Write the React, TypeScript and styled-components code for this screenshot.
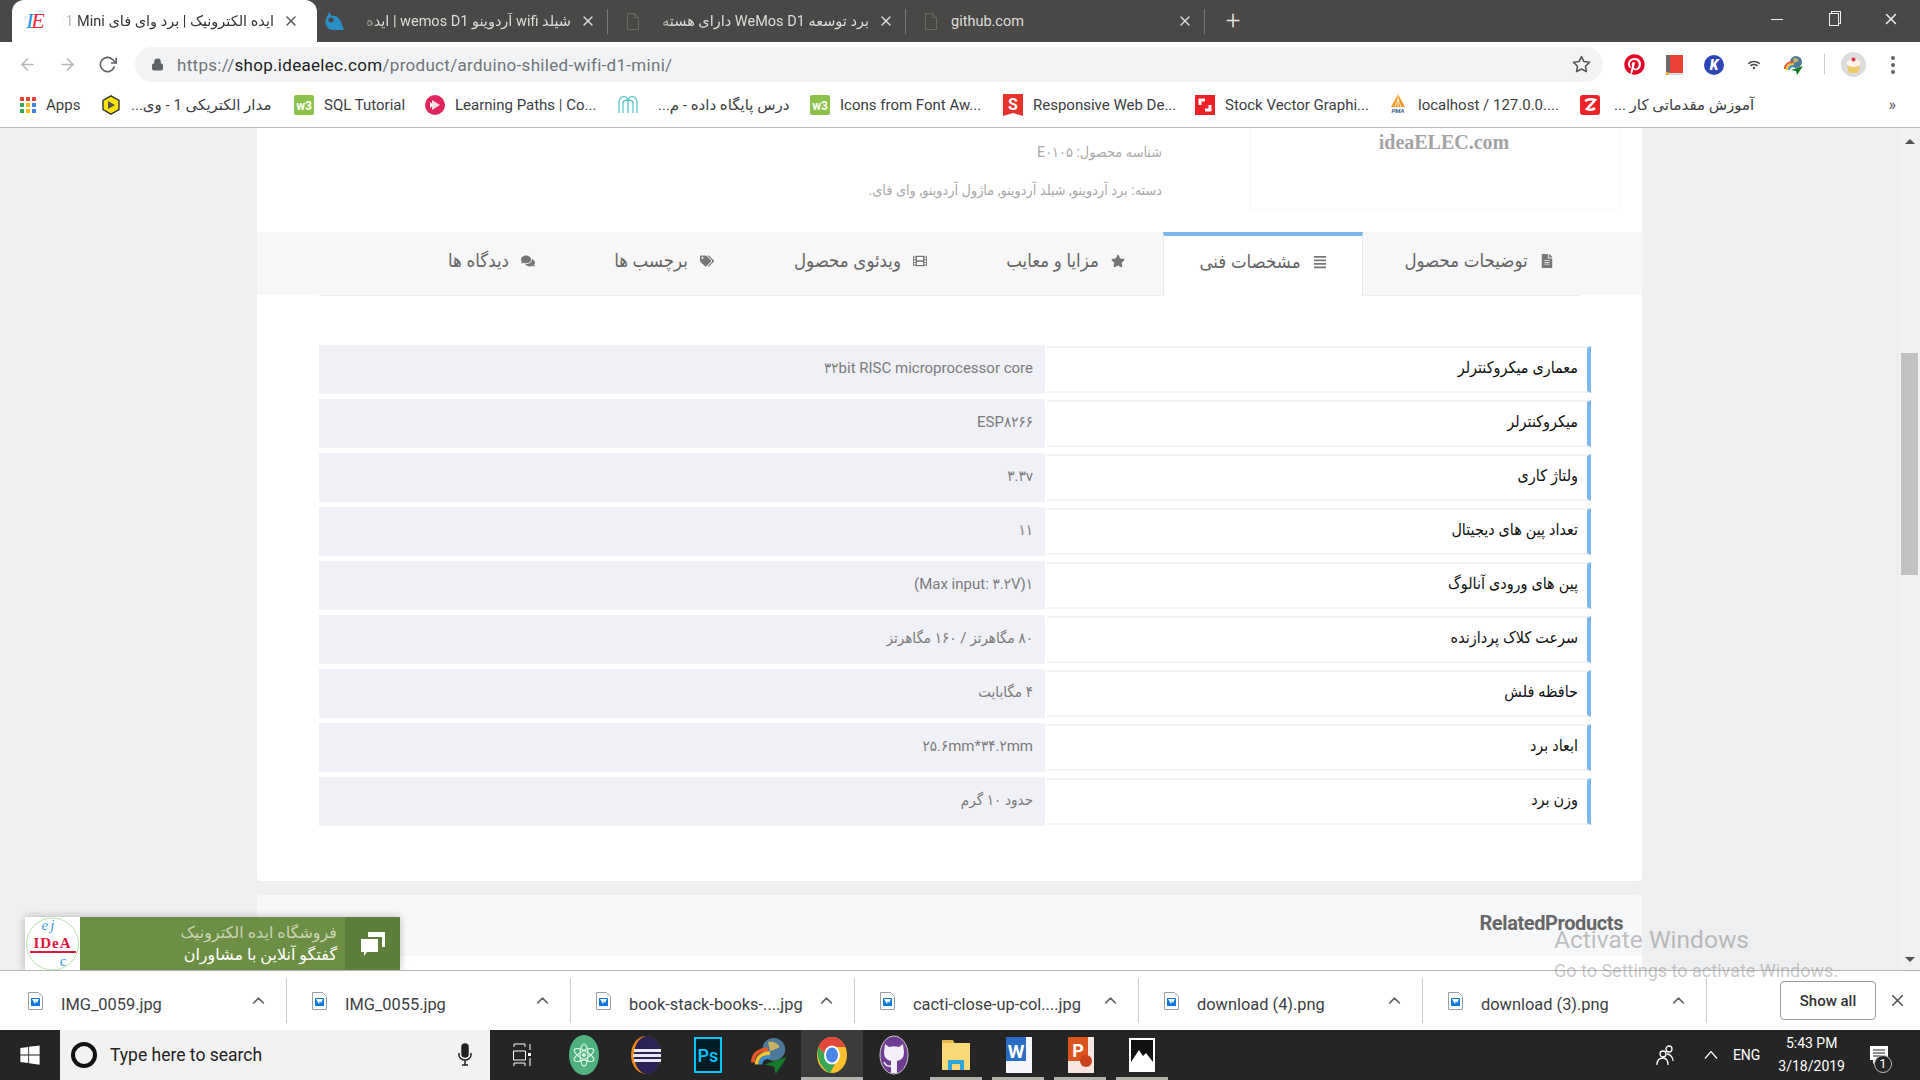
import React from 'react'
import styled, { createGlobalStyle } from 'styled-components'
import {
  FaAlignJustify,
  FaComments,
  FaFileAlt,
  FaFilm,
  FaPinterest,
  FaStar,
  FaTags,
  FaWifi,
  FaWindows,
} from 'react-icons/fa'
import { FiArrowLeft, FiArrowRight, FiChevronUp, FiLock, FiRotateCw, FiStar, FiX } from 'react-icons/fi'

const ui = `Roboto, "DejaVu Sans", sans-serif`
const page = `Roboto, "DejaVu Sans Condensed", "DejaVu Sans", sans-serif`

const GlobalStyle = createGlobalStyle`
  html, body { margin: 0; padding: 0; background: #fff; }
  * { box-sizing: border-box; }
`

const specs = [
  ['معماری میکروکنترلر', '۳۲bit RISC microprocessor core'],
  ['میکروکنترلر', 'ESP۸۲۶۶'],
  ['ولتاژ کاری', '۳.۳v'],
  ['تعداد پین های دیجیتال', '۱۱'],
  ['پین های ورودی آنالوگ', '۱(Max input: ۳.۲V)'],
  ['سرعت کلاک پردازنده', '۸۰ مگاهرتز / ۱۶۰ مگاهرتز'],
  ['حافظه فلش', '۴ مگابایت'],
  ['ابعاد برد', '۲۵.۶mm*۳۴.۲mm'],
  ['وزن برد', 'حدود ۱۰ گرم'],
]

const DocIcon = () => (
  <svg width="14" height="17" viewBox="0 0 14 17">
    <path d="M1.5 .5h7l4 4v12h-11z" fill="none" stroke="#6b6966" />
    <path d="M8.5 .5v4h4" fill="none" stroke="#6b6966" />
  </svg>
)

const HandIcon = () => (
  <svg width="22" height="22" viewBox="0 0 22 22">
    <path d="M6 2l3 4c4-1 7 2 9 6l3 8H10C4 20 1 14 3 9z" fill="#2a8fc7" />
    <circle cx="8" cy="10" r="2.6" fill="#4a4846" />
  </svg>
)

const AppsIcon = () => (
  <svg width="16" height="16" viewBox="0 0 16 16">
    {['#ea4335', '#ea4335', '#ea4335', '#34a853', '#fbbc05', '#4285f4', '#34a853', '#fbbc05', '#4285f4'].map((c, i) => (
      <rect key={i} x={(i % 3) * 6} y={Math.floor(i / 3) * 6} width="4" height="4" fill={c} />
    ))}
  </svg>
)

const HexIcon = () => (
  <svg width="20" height="20" viewBox="0 0 20 20">
    <path d="M10 .8l8 4.6v9.2l-8 4.6-8-4.6V5.400z" fill="#ffe600" stroke="#333" strokeWidth="1.400" />
    <path d="M7 6l7 4-7 4z" fill="#555" />
  </svg>
)

const W3Icon = () => (
  <svg width="20" height="20" viewBox="0 0 20 20">
    <rect width="20" height="20" rx="2" fill="#8bc34a" />
    <text x="10" y="15" textAnchor="middle" fontSize="12" fontWeight="700" fontFamily="Roboto, sans-serif" fill="#fff">w3</text>
  </svg>
)

const RedPlayIcon = () => (
  <svg width="20" height="20" viewBox="0 0 20 20">
    <circle cx="10" cy="10" r="10" fill="#e0245e" />
    <path d="M7 5l8 5-8 5z" fill="#fff" opacity=".85" />
    <path d="M5 7l4 3-4 3z" fill="#fff" />
  </svg>
)

const ArchIcon = () => (
  <svg width="20" height="20" viewBox="0 0 20 20" fill="none" stroke="#59c3c9" strokeWidth="1.300">
    <path d="M1 18V8c0-8 8-8 9-3 1-5 9-5 9 3v10" />
    <path d="M5 18V8c0-3 3-3 5-3s5 0 5 3v10M10 5v13" />
  </svg>
)

const SIcon = () => (
  <svg width="20" height="22" viewBox="0 0 20 22">
    <path d="M0 0h20v22l-10-3-10 3z" fill="#e8332a" />
    <text x="10" y="16" textAnchor="middle" fontSize="16" fontWeight="700" fontFamily="Roboto, sans-serif" fill="#fff">S</text>
  </svg>
)

const StockIcon = () => (
  <svg width="20" height="20" viewBox="0 0 20 20">
    <rect width="20" height="20" fill="#ec2227" />
    <path d="M5 10V5h5M15 10v5h-5" fill="none" stroke="#fff" strokeWidth="3" />
  </svg>
)

const PmaIcon = () => (
  <svg width="20" height="22" viewBox="0 0 20 22">
    <path d="M10 0l7 13H3z" fill="#f29b24" />
    <path d="M10 0v13M7 13l3-8 3 8" stroke="#fff" strokeWidth=".7" fill="none" />
    <text x="10" y="19" textAnchor="middle" fontSize="6" fontStyle="italic" fontWeight="700" fontFamily="Roboto, sans-serif" fill="#3b5a8a">PMA</text>
  </svg>
)

const ZIcon = () => (
  <svg width="20" height="20" viewBox="0 0 20 20">
    <rect width="20" height="20" rx="3" fill="#ec2227" />
    <path d="M5 6c3-2 7-2 10-1l-8 9c3 1 6 1 8-1" fill="none" stroke="#fff" strokeWidth="2.600" />
  </svg>
)

const RedBookIcon = () => (
  <svg width="17" height="20" viewBox="0 0 17 20">
    <rect width="4" height="18" fill="#6b6b6b" />
    <rect x="4" width="13" height="18" fill="#e94335" />
    <rect y="18" width="17" height="2" fill="#ddd" />
    <rect y="17" width="3" height="3" fill="#e8a33d" />
  </svg>
)

const KIcon = () => (
  <svg width="20" height="20" viewBox="0 0 20 20">
    <circle cx="10" cy="10" r="10" fill="#2c46b5" />
    <text x="10" y="15" textAnchor="middle" fontSize="14" fontWeight="900" fontStyle="italic" fontFamily="Roboto, sans-serif" fill="#fff">K</text>
  </svg>
)

const IdmIcon = ({ size = 20 }: { size?: number }) => (
  <svg width={size} height={size} viewBox="0 0 20 20">
    <circle cx="12" cy="7" r="6" fill="#4d7a9a" />
    <path d="M9 3c2 0 5 0 6 3l-5 2z" fill="#c9b260" />
    <path d="M1 14c0-5 4-7 8-7" fill="none" stroke="#e8572a" strokeWidth="2" />
    <path d="M3 15c0-4 3-6 7-6" fill="none" stroke="#f2c230" strokeWidth="2" />
    <path d="M5 15c0-3 2-4 5-4" fill="none" stroke="#3a8fd0" strokeWidth="2" />
    <path d="M7 15l12-4-6 9-1-4z" fill="#127a26" />
  </svg>
)

const CupcakeIcon = () => (
  <svg width="25" height="25" viewBox="0 0 25 25">
    <circle cx="12.500" cy="12.500" r="12.500" fill="#dcdcdc" />
    <path d="M6 14h13l-2 7H8z" fill="#f0c96a" />
    <ellipse cx="12.500" cy="11" rx="7" ry="4" fill="#fff3ea" />
    <circle cx="12.500" cy="7.500" r="2" fill="#d8324a" />
  </svg>
)

const AtomIcon = () => (
  <svg width="30" height="40" viewBox="0 0 30 40">
    <ellipse cx="15" cy="20" rx="15" ry="20" fill="#4fb27e" />
    <g fill="none" stroke="#d9f2e4" strokeWidth="1.200">
      <ellipse cx="15" cy="20" rx="4" ry="11" />
      <ellipse cx="15" cy="20" rx="4" ry="11" transform="rotate(60 15 20)" />
      <ellipse cx="15" cy="20" rx="4" ry="11" transform="rotate(-60 15 20)" />
    </g>
    <circle cx="15" cy="20" r="2" fill="#d9f2e4" />
  </svg>
)

const EclipseIcon = () => (
  <svg width="30" height="40" viewBox="0 0 30 40">
    <ellipse cx="15" cy="20" rx="15" ry="19" fill="#f08a12" />
    <ellipse cx="16.500" cy="20" rx="13.500" ry="19" fill="#2c2255" />
    <rect x="3" y="14" width="27" height="3" fill="#e8e8f2" />
    <rect x="2" y="19" width="28" height="3" fill="#e8e8f2" />
    <rect x="3" y="24" width="27" height="3" fill="#e8e8f2" />
  </svg>
)

const PsIcon = () => (
  <svg width="28" height="36" viewBox="0 0 28 36">
    <rect x="1" y="1" width="26" height="34" fill="#001d26" stroke="#00c8ff" strokeWidth="2" />
    <text x="14" y="25" textAnchor="middle" fontSize="18" fontWeight="500" fontFamily="Roboto, sans-serif" fill="#00c8ff">Ps</text>
  </svg>
)

const ChromeIcon = () => (
  <svg width="30" height="38" viewBox="0 0 30 38">
    <ellipse cx="15" cy="19" rx="15" ry="18" fill="#fbc02d" />
    <path d="M15 1C9 1 3 5 1.500 11L9 20 15 11h13.500C26 5 21 1 15 1z" fill="#e3483c" />
    <path d="M1.500 11C-1 19 2 31 13 37l6-11-10-6z" fill="#3aa655" />
    <ellipse cx="15" cy="19" rx="8" ry="9.500" fill="#fff" />
    <ellipse cx="15" cy="19" rx="6" ry="7.500" fill="#4a86e8" />
  </svg>
)

const GithubIcon = () => (
  <svg width="30" height="40" viewBox="0 0 30 40">
    <ellipse cx="15" cy="20" rx="14" ry="19" fill="#6f3b93" stroke="#ccc" />
    <path d="M6 9l4 3q5-1.500 10 0l4-3 1 8q0 8-7 9v12h-6V26q-7-1-7-9z" fill="#f3eef7" />
    <path d="M12 31q-5 1-7-4" fill="none" stroke="#f3eef7" strokeWidth="1.500" />
  </svg>
)

const FolderIcon = () => (
  <svg width="28" height="30" viewBox="0 0 28 30">
    <path d="M0 0h11l2 4h-13z" fill="#e5b94c" />
    <rect y="3" width="28" height="27" fill="#f9d977" />
    <path d="M6 30V20h16v10h-4v-6h-8v6z" fill="#2fa7dc" />
  </svg>
)

const WordIcon = () => (
  <svg width="28" height="36" viewBox="0 0 28 36">
    <path d="M2 0h26v36H2z" fill="#f4f6fa" />
    <path d="M2 0h20v24H2z" fill="#2b6cc4" />
    <text x="12" y="21" textAnchor="middle" fontSize="19" fontWeight="700" fontFamily="Roboto, sans-serif" fill="#fff">W</text>
  </svg>
)

const PptIcon = () => (
  <svg width="28" height="36" viewBox="0 0 28 36">
    <path d="M2 0h26v36H2z" fill="#f7e6df" />
    <path d="M2 0h20v24H2z" fill="#d9541e" />
    <text x="12" y="20" textAnchor="middle" fontSize="18" fontWeight="700" fontFamily="Roboto, sans-serif" fill="#fff">P</text>
    <circle cx="20" cy="24" r="6" fill="#c9431a" />
  </svg>
)

const PhotosIcon = () => (
  <svg width="26" height="34" viewBox="0 0 26 34">
    <rect width="26" height="34" fill="#fff" />
    <rect x="2" y="2" width="22" height="26" fill="#111" />
    <path d="M2 24l8-12 4 6 3-3 7 9v4H2z" fill="#fff" />
  </svg>
)

const FileThumb = () => (
  <svg width="15" height="18" viewBox="0 0 15 18">
    <path d="M.5.5h10l4 4v13H.5z" fill="#fff" stroke="#9aa0a6" />
    <rect x="3" y="6" width="9" height="8" fill="#1078d8" />
    <path d="M4 7h7l-2 4-1-2-1 3z" fill="#fff" />
  </svg>
)

const ChatLogo = () => (
  <svg width="55" height="53" viewBox="0 0 55 53">
    <circle cx="27.500" cy="27" r="26" fill="none" stroke="#b9e3a8" strokeWidth="1" />
    <text x="24" y="13" textAnchor="middle" fontSize="15" fontFamily="Liberation Serif, serif" fontStyle="italic" letterSpacing="2" fill="#3b9bd6">ej</text>
    <text x="27.500" y="31" textAnchor="middle" fontSize="15" fontWeight="700" fontFamily="Liberation Serif, serif" letterSpacing="1" fill="#e01840">IDeA</text>
    <rect x="5" y="34" width="46" height="2" fill="#e01840" />
    <text x="38" y="49" textAnchor="middle" fontSize="15" fontFamily="Liberation Serif, serif" fill="#3b9bd6">c</text>
  </svg>
)

const ChatBubbles = () => (
  <svg width="26" height="26" viewBox="0 0 26 26">
    <path d="M8 1h17v15h-3V6H8z" fill="#fff" />
    <path d="M1 8h17v13H7l-3 4v-4H1z" fill="#fff" />
  </svg>
)

const tabs = [
  { title: 'توضیحات محصول', icon: <FaFileAlt />, width: 232 },
  { title: 'مشخصات فنی', icon: <FaAlignJustify />, width: 200, active: true },
  { title: 'مزایا و معایب', icon: <FaStar />, width: 195 },
  { title: 'ویدئوی محصول', icon: <FaFilm />, width: 215 },
  { title: 'برچسب ها', icon: <FaTags />, width: 178 },
  { title: 'دیدگاه ها', icon: <FaComments />, width: 167 },
]

const bookmarks = [
  { icon: <AppsIcon />, label: 'Apps', width: 81 },
  { icon: <HexIcon />, label: 'مدار الکتریکی 1 - وی...', width: 193 },
  { icon: <W3Icon />, label: 'SQL Tutorial', width: 131 },
  { icon: <RedPlayIcon />, label: 'Learning Paths | Co...', width: 193 },
  { icon: <ArchIcon />, label: 'درس پایگاه داده - م...', width: 192, gap: 20 },
  { icon: <W3Icon />, label: 'Icons from Font Aw...', width: 193 },
  { icon: <SIcon />, label: 'Responsive Web De...', width: 192 },
  { icon: <StockIcon />, label: 'Stock Vector Graphi...', width: 193 },
  { icon: <PmaIcon />, label: 'localhost / 127.0.0....', width: 192 },
  { icon: <ZIcon />, label: 'آموزش مقدماتی کار ...', width: 193, gap: 14 },
]

const downloads = ['IMG_0059.jpg', 'IMG_0055.jpg', 'book-stack-books-....jpg', 'cacti-close-up-col....jpg', 'download (4).png', 'download (3).png']

const pinned = [
  { icon: <AtomIcon /> },
  { icon: <EclipseIcon /> },
  { icon: <PsIcon /> },
  { icon: <IdmIcon size={38} /> },
  { icon: <ChromeIcon />, active: true, open: true },
  { icon: <GithubIcon /> },
  { icon: <FolderIcon />, open: true },
  { icon: <WordIcon />, open: true },
  { icon: <PptIcon />, open: true },
  { icon: <PhotosIcon />, open: true },
]

export default function App() {
  return (
    <Screen>
      <GlobalStyle />
      <TabStrip>
        <BrowserTab $active $width={305}>
          <IeLogo><span>I</span><b>E</b></IeLogo>
          <TabTitle $active dir="rtl">ایده الکترونیک | برد وای فای D1 Mini</TabTitle>
          <TabClose $active><FiX /></TabClose>
        </BrowserTab>
        <BrowserTab $width={291} $divider>
          <HandFav><HandIcon /></HandFav>
          <TabTitle dir="rtl">شیلد wifi آردوینو wemos D1 | ایده</TabTitle>
          <TabClose><FiX /></TabClose>
        </BrowserTab>
        <BrowserTab $width={298} $divider>
          <DocFav><DocIcon /></DocFav>
          <TabTitle dir="rtl">برد توسعه WeMos D1 دارای هسته</TabTitle>
          <TabClose><FiX /></TabClose>
        </BrowserTab>
        <BrowserTab $width={299} $divider>
          <DocFav><DocIcon /></DocFav>
          <TabTitle>github.com</TabTitle>
          <TabClose><FiX /></TabClose>
        </BrowserTab>
        <NewTab>+</NewTab>
        <WindowControls>
          <WindowButton><Minimize /></WindowButton>
          <WindowButton><Restore /></WindowButton>
          <WindowButton><FiX /></WindowButton>
        </WindowControls>
      </TabStrip>

      <Toolbar>
        <NavButton $muted><FiArrowLeft /></NavButton>
        <NavButton $muted><FiArrowRight /></NavButton>
        <NavButton><FiRotateCw /></NavButton>
        <UrlBar>
          <LockIcon><FiLock /></LockIcon>
          <UrlText>https://<UrlHost>shop.ideaelec.com</UrlHost>/product/arduino-shiled-wifi-d1-mini/</UrlText>
          <StarIcon><FiStar /></StarIcon>
        </UrlBar>
        <Extensions>
          <Extension><FaPinterest color="#e60023" size={21} /></Extension>
          <Extension><RedBookIcon /></Extension>
          <Extension><KIcon /></Extension>
          <Extension><FaWifi color="#444" size={12} /></Extension>
          <Extension><IdmIcon /></Extension>
        </Extensions>
        <ToolbarDivider />
        <Avatar><CupcakeIcon /></Avatar>
        <MenuDots><i /><i /><i /></MenuDots>
      </Toolbar>

      <BookmarkBar>
        {bookmarks.map(b => (
          <Bookmark key={b.label} $width={b.width} $gap={b.gap ?? 10}>
            <BookmarkIcon>{b.icon}</BookmarkIcon>
            <BookmarkLabel>{b.label}</BookmarkLabel>
          </Bookmark>
        ))}
        <MoreBookmarks>»</MoreBookmarks>
      </BookmarkBar>

      <Viewport>
        <PageArea dir="rtl">
          <Card>
            <ProductHead>
              <ProductImage><Watermark>ideaELEC.com</Watermark></ProductImage>
              <ProductMeta>
                <MetaLine>شناسه محصول: E۰۱۰۵</MetaLine>
                <MetaLine>دسته: برد آردوینو, شیلد آردوینو, ماژول آردوینو, وای فای.</MetaLine>
              </ProductMeta>
            </ProductHead>
            <TabBar>
              <TabList>
                {tabs.map(t => (
                  <ProductTab key={t.title} $active={t.active} $width={t.width}>
                    <TabIcon>{t.icon}</TabIcon>
                    {t.title}
                  </ProductTab>
                ))}
              </TabList>
            </TabBar>
            <SpecTable>
              {specs.map(([key, value]) => (
                <SpecRow key={key}>
                  <SpecKey>{key}</SpecKey>
                  <SpecValue>{value}</SpecValue>
                </SpecRow>
              ))}
            </SpecTable>
          </Card>
          <RelatedCard>
            <RelatedTitle>RelatedProducts</RelatedTitle>
          </RelatedCard>
        </PageArea>
        <Scrollbar>
          <ArrowUp />
          <ScrollThumb />
          <ArrowDown />
        </Scrollbar>
        <ChatWidget dir="rtl">
          <ChatIcon><ChatBubbles /></ChatIcon>
          <ChatText>
            <ChatMuted>فروشگاه ایده الکترونیک</ChatMuted>
            <ChatStrong>گفتگو آنلاین با مشاوران</ChatStrong>
          </ChatText>
          <ChatBrand><ChatLogo /></ChatBrand>
        </ChatWidget>
      </Viewport>

      <DownloadBar>
        {downloads.map(name => (
          <DownloadItem key={name}>
            <FileThumb />
            <DownloadName>{name}</DownloadName>
            <DownloadCaret><FiChevronUp /></DownloadCaret>
          </DownloadItem>
        ))}
        <ShowAll>Show all</ShowAll>
        <DownloadClose><FiX /></DownloadClose>
      </DownloadBar>

      <Taskbar>
        <StartButton><FaWindows /></StartButton>
        <SearchBox>
          <CortanaRing />
          <SearchText>Type here to search</SearchText>
          <MicIcon viewBox="0 0 14 24" fill="none" stroke="#222" strokeWidth="1.500">
            <rect x="4" y="1" width="6" height="13" rx="3" fill="#222" />
            <path d="M1 10v2c0 3 3 5 6 5s6-2 6-5v-2M7 17v5M4 22h6" />
          </MicIcon>
        </SearchBox>
        <TaskView>
          <svg width="20" height="24" viewBox="0 0 20 24" fill="none" stroke="#fff">
            <path d="M2 1h11v3M2 1v3M1.500 8h12v9h-12zM2 20h11v3M2 23v-3M18 1v6M18 15v8" />
            <rect x="16" y="10" width="3" height="3" fill="#fff" stroke="none" />
          </svg>
        </TaskView>
        {pinned.map((p, i) => (
          <TaskIcon key={i} $active={p.active} $open={p.open}>{p.icon}</TaskIcon>
        ))}
        <Tray>
          <svg width="18" height="22" viewBox="0 0 18 22" fill="none" stroke="#fff" strokeWidth="1.300">
            <circle cx="7" cy="10" r="3" />
            <circle cx="13" cy="5" r="3" />
            <path d="M1 21c0-4 2-7 6-7s5 3 5 7M11 10c3 0 6 3 6 7" />
          </svg>
          <TrayCaret viewBox="0 0 14 8" fill="none" stroke="#fff" strokeWidth="1.200"><path d="M1 7.500l6-7 6 7" /></TrayCaret>
          <TrayLang>ENG</TrayLang>
          <Clock>
            <span>5:43 PM</span>
            <span>3/18/2019</span>
          </Clock>
          <Notifications>
            <svg width="20" height="20" viewBox="0 0 20 20">
              <path d="M1 1h18v14H8l-4 4v-4H1z" fill="#fff" />
              <path d="M4 5h12M4 8h12M4 11h8" stroke="#252525" strokeWidth="1.200" />
            </svg>
            <NotifyCount>1</NotifyCount>
          </Notifications>
        </Tray>
      </Taskbar>

      <ActivateNote>
        <ActivateTitle>Activate Windows</ActivateTitle>
        <ActivateHint>Go to Settings to activate Windows.</ActivateHint>
      </ActivateNote>
    </Screen>
  )
}

// Styles
const Screen = styled.div`
  position: relative;
  width: 1920px;
  height: 1080px;
  display: flex;
  flex-direction: column;
  overflow: hidden;
  font-family: ${ui};
`

const TabStrip = styled.div`
  height: 42px;
  flex-shrink: 0;
  display: flex;
  padding-left: 12px;
  background: #4a4846;
`

const BrowserTab = styled.div<{ $active?: boolean; $width: number; $divider?: boolean }>`
  position: relative;
  width: ${p => p.$width}px;
  display: flex;
  align-items: center;
  gap: 9px;
  padding: 0 ${p => (p.$active ? 18 : 12)}px 0 14px;
  background: ${p => (p.$active ? '#fff' : 'transparent')};
  border-radius: ${p => (p.$active ? '12px 12px 0 0' : '0')};
  flex-shrink: 0;

  &::after {
    content: '';
    display: ${p => (p.$divider ? 'block' : 'none')};
    position: absolute;
    right: 0;
    top: 9px;
    height: 25px;
    width: 1px;
    background: #7a7876;
  }
`

const HandFav = styled.span`
  display: flex;
  margin-left: -8px;
  margin-right: 6px;
`

const DocFav = styled.span`
  display: flex;
  margin: 0 4px;
`

const IeLogo = styled.span`
  width: 20px;
  margin-right: 8px;
  font: italic 22px/1 "Liberation Serif", serif;
  color: #ee2a3c;
  letter-spacing: -2px;

  span { color: #2196e8; }
  b { font-weight: 400; }
`

const TabTitle = styled.div<{ $active?: boolean }>`
  flex: 1;
  min-width: 0;
  overflow: hidden;
  white-space: nowrap;
  font-size: 14.500px;
  color: ${p => (p.$active ? '#333' : '#dddcda')};

  &[dir='rtl'] {
    mask-image: linear-gradient(to right, transparent, #000 18px);
  }
`

const TabClose = styled.span<{ $active?: boolean }>`
  display: flex;
  font-size: 16px;
  color: ${p => (p.$active ? '#555' : '#dddcda')};
`

const NewTab = styled.div`
  width: 56px;
  text-align: center;
  font: 300 26px/40px ${ui};
  color: #e0e0de;
`

const WindowControls = styled.div`
  display: flex;
  margin-left: auto;
  padding-right: 1px;
`

const WindowButton = styled.div`
  width: 57px;
  display: flex;
  align-items: center;
  justify-content: center;
  padding-bottom: 4px;
  color: #eee;
  font-size: 18px;
`

const Minimize = styled.i`
  display: block;
  width: 12px;
  height: 1px;
  background: #eee;
`

const Restore = styled.i`
  display: block;
  width: 10px;
  height: 13px;
  border: 1px solid #eee;
  box-shadow: 2px -2px 0 -1px #4a4846, 2px -2px 0 0 #eee;
`

const Toolbar = styled.div`
  height: 45px;
  flex-shrink: 0;
  display: flex;
  align-items: flex-start;
  padding: 5px 0 0 7px;
  background: #fff;
`

const NavButton = styled.div<{ $muted?: boolean }>`
  width: 40px;
  height: 35px;
  display: flex;
  align-items: center;
  justify-content: center;
  font-size: 19px;
  color: ${p => (p.$muted ? '#b4b6b9' : '#5f6368')};
`

const UrlBar = styled.div`
  width: 1468px;
  height: 35px;
  margin-left: 8px;
  display: flex;
  align-items: center;
  padding: 0 12px 0 16px;
  background: #f1f3f4;
  border-radius: 18px;
`

const LockIcon = styled.span`
  display: flex;
  width: 26px;
  font-size: 13px;
  color: #5f6368;
  svg { fill: #5f6368; }
`

const UrlText = styled.div`
  flex: 1;
  font-size: 17px;
  letter-spacing: .3px;
  color: #70757a;
`

const UrlHost = styled.span`
  color: #202124;
`

const StarIcon = styled.span`
  display: flex;
  font-size: 19px;
  color: #555;
`

const Extensions = styled.div`
  display: flex;
  margin-left: 11px;
`

const Extension = styled.div`
  width: 40px;
  height: 35px;
  display: flex;
  align-items: center;
  justify-content: center;
`

const ToolbarDivider = styled.div`
  width: 1px;
  height: 20px;
  margin: 7px 0 0 10px;
  background: #ccc;
`

const Avatar = styled.div`
  display: flex;
  margin: 5px 0 0 16px;
`

const MenuDots = styled.div`
  display: flex;
  flex-direction: column;
  gap: 3px;
  margin: 9px 0 0 25px;

  i {
    display: block;
    width: 4px;
    height: 4px;
    border-radius: 50%;
    background: #5f6368;
  }
`

const BookmarkBar = styled.div`
  height: 41px;
  flex-shrink: 0;
  display: flex;
  align-items: center;
  padding: 0 0 5px 20px;
  background: #fff;
  border-bottom: 1px solid #b9b9b9;
`

const Bookmark = styled.div<{ $width: number; $gap: number }>`
  width: ${p => p.$width}px;
  flex-shrink: 0;
  display: flex;
  align-items: center;
  gap: ${p => p.$gap}px;
`

const BookmarkIcon = styled.span`
  display: flex;
  flex-shrink: 0;
`

const BookmarkLabel = styled.span`
  font-size: 15px;
  color: #3c4043;
  white-space: nowrap;
  unicode-bidi: plaintext;
`

const MoreBookmarks = styled.span`
  margin-left: auto;
  padding-right: 24px;
  font-size: 16px;
  color: #555;
`

const Viewport = styled.div`
  position: relative;
  flex: 1;
  min-height: 0;
  display: flex;
  background: #eeeff1;
  overflow: hidden;
`

const PageArea = styled.div`
  flex: 1;
  font-family: ${page};
`

const Card = styled.div`
  width: 1385px;
  margin: 0 auto;
  background: #fff;
  border-radius: 0 0 4px 4px;
`

const ProductHead = styled.div`
  height: 104px;
  display: flex;
  padding-right: 22px;
`

const ProductImage = styled.div`
  width: 370px;
  height: 82px;
  padding-left: 18px;
  text-align: center;
  border: solid #f8f8fa;
  border-width: 0 1px 1px 1px;
`

const Watermark = styled.div`
  padding-top: 2px;
  font: 700 20px/24px "Liberation Serif", serif;
  color: #a3a3a3;
`

const ProductMeta = styled.div`
  margin-right: 88px;
  padding-top: 15px;
  display: flex;
  flex-direction: column;
  gap: 20px;
`

const MetaLine = styled.div`
  font-size: 14.300px;
  line-height: 18px;
  color: #a9a9a9;
`

const TabBar = styled.div`
  height: 64px;
  padding: 0 62px;
  background: linear-gradient(#f7f7f7, #f7f7f7) top / 100% 63px no-repeat;
`

const TabList = styled.div`
  height: 64px;
  display: flex;
  border-bottom: 1px solid #eee;
`

const ProductTab = styled.div<{ $active?: boolean; $width: number }>`
  width: ${p => p.$width}px;
  height: 64px;
  display: flex;
  align-items: center;
  justify-content: center;
  gap: 12px;
  padding-bottom: 6px;
  font-size: 18.500px;
  color: #666;
  white-space: nowrap;

  &:first-child { margin-right: -15px; }

  ${p =>
    p.$active &&
    `
    background: #fff;
    border: 1px solid #e8e8e8;
    border-top: 4px solid #7cb8ee;
    border-bottom: 0;
    padding-bottom: 9px;
  `}
`

const TabIcon = styled.span`
  display: flex;
  font-size: 14px;
  color: #777;
`

const SpecTable = styled.div`
  padding: 49px 51px 55px 62px;
  display: flex;
  flex-direction: column;
  gap: 5px;
`

const SpecRow = styled.div`
  height: 49px;
  display: flex;
`

const SpecKey = styled.div`
  width: 544px;
  margin-left: 2px;
  height: 47px;
  align-self: center;
  display: flex;
  align-items: center;
  padding: 0 9px 5px 0;
  font-size: 16px;
  color: #111;
  border-right: 4px solid #7cb8ee;
  border-top: 2px solid #f3f3f6;
  border-bottom: 2px solid #f3f3f6;
`

const SpecValue = styled.div`
  flex: 1;
  display: flex;
  align-items: center;
  padding: 0 12px 4px 0;
  font-size: 15px;
  color: #7b7b7b;
  background: #f0f1f6;
`

const RelatedCard = styled.div`
  width: 1385px;
  margin: 14px auto 0;
  padding: 16px 19px 0 0;
  height: 80px;
  background: linear-gradient(#f7f8fa, #f7f8fa) top / 100% 61px no-repeat #fff;
  border-radius: 4px 4px 0 0;
`

const RelatedTitle = styled.div`
  direction: ltr;
  text-align: right;
  font-size: 20px;
  font-weight: 700;
  line-height: 24px;
  letter-spacing: -.4px;
  color: #666;
`

const Scrollbar = styled.div`
  width: 21px;
  flex-shrink: 0;
  display: flex;
  flex-direction: column;
  align-items: center;
  padding: 11px 0 8px;
  background: #f1f1f1;
`

const ArrowUp = styled.i`
  width: 0;
  height: 0;
  border: 5px solid transparent;
  border-top: 0;
  border-bottom: 5px solid #505050;
`

const ArrowDown = styled.i`
  width: 0;
  height: 0;
  margin-top: auto;
  border: 5px solid transparent;
  border-bottom: 0;
  border-top: 5px solid #505050;
`

const ScrollThumb = styled.div`
  width: 17px;
  height: 222px;
  margin-top: 209px;
  background: #c1c1c1;
`

const ChatWidget = styled.div`
  position: absolute;
  left: 25px;
  bottom: 0;
  width: 375px;
  height: 53px;
  display: flex;
  box-shadow: 0 0 8px rgba(0, 0, 0, .25);
`

const ChatIcon = styled.div`
  width: 55px;
  display: flex;
  align-items: center;
  justify-content: center;
  background: #5e7f3c;
`

const ChatText = styled.div`
  flex: 1;
  display: flex;
  flex-direction: column;
  justify-content: center;
  gap: 4px;
  padding-right: 8px;
  background: #6d8f45;
  font-family: ${ui};
  font-size: 16px;
  line-height: 18px;
  white-space: nowrap;
`

const ChatMuted = styled.div`
  color: #c8d5b6;
`

const ChatStrong = styled.div`
  color: #fff;
`

const ChatBrand = styled.div`
  width: 55px;
  display: flex;
  background: #fff;
`

const DownloadBar = styled.div`
  position: relative;
  height: 60px;
  flex-shrink: 0;
  display: flex;
  align-items: center;
  padding-left: 3px;
  background: #fff;
  border-top: 1px solid #b4b4b4;
`

const DownloadItem = styled.div`
  width: 284px;
  height: 45px;
  flex-shrink: 0;
  display: flex;
  align-items: center;
  padding: 0 18px 0 25px;
  border-right: 1px solid #ccc;
`

const DownloadName = styled.div`
  flex: 1;
  margin-left: 18px;
  padding-top: 7px;
  font-size: 16.400px;
  color: #3c4043;
  white-space: nowrap;
`

const DownloadCaret = styled.span`
  display: flex;
  font-size: 19px;
  color: #5f6368;
`

const ShowAll = styled.div`
  width: 96px;
  height: 39px;
  margin-left: 73px;
  display: flex;
  align-items: center;
  justify-content: center;
  font-size: 15px;
  font-weight: 500;
  color: #333;
  background: #fff;
  border: 1px solid #9a9a9a;
  border-radius: 4px;
`

const DownloadClose = styled.span`
  display: flex;
  margin-left: 12px;
  font-size: 19px;
  color: #555;
`

const Taskbar = styled.div`
  height: 50px;
  flex-shrink: 0;
  display: flex;
  background: #252525;
`

const StartButton = styled.div`
  width: 60px;
  display: flex;
  align-items: center;
  justify-content: center;
  font-size: 22px;
  color: #fff;
`

const SearchBox = styled.div`
  width: 430px;
  display: flex;
  align-items: center;
  padding: 0 18px 0 11px;
  background: #f2f2f2;
`

const CortanaRing = styled.i`
  width: 26px;
  height: 26px;
  border: 4px solid #111;
  border-radius: 50%;
`

const SearchText = styled.span`
  flex: 1;
  margin-left: 13px;
  font-size: 17.500px;
  color: #222;
`

const MicIcon = styled.svg`
  width: 14px;
  height: 24px;
`

const TaskView = styled.div`
  width: 63px;
  display: flex;
  align-items: center;
  justify-content: center;
`

const TaskIcon = styled.div<{ $active?: boolean; $open?: boolean }>`
  position: relative;
  width: 62px;
  display: flex;
  align-items: center;
  justify-content: center;
  background: ${p => (p.$active ? '#3a3a3a' : 'transparent')};

  &::after {
    content: '';
    display: ${p => (p.$open ? 'block' : 'none')};
    position: absolute;
    left: ${p => (p.$active ? 0 : 5)}px;
    right: ${p => (p.$active ? 0 : 5)}px;
    bottom: 0;
    height: 3px;
    background: #b3b3ad;
  }
`

const Tray = styled.div`
  margin-left: auto;
  display: flex;
  align-items: center;
  padding-bottom: 1px;
  color: #fff;
`

const TrayCaret = styled.svg`
  width: 14px;
  height: 8px;
  margin-left: 30px;
`

const TrayLang = styled.span`
  margin-left: 15px;
  font-size: 14px;
`

const Clock = styled.div`
  margin-left: 18px;
  display: flex;
  flex-direction: column;
  align-items: center;
  gap: 6px;
  font-size: 14px;
  line-height: 17px;
`

const Notifications = styled.div`
  position: relative;
  display: flex;
  margin: 0 31px 0 24px;
`

const NotifyCount = styled.span`
  position: absolute;
  right: -3px;
  bottom: -8px;
  width: 18px;
  height: 18px;
  text-align: center;
  font-size: 13px;
  line-height: 16px;
  border: 1px solid #bbb;
  border-radius: 50%;
  background: #252525;
`

const ActivateNote = styled.div`
  position: absolute;
  left: 1554px;
  top: 924px;
  pointer-events: none;
`

const ActivateTitle = styled.div`
  font-size: 24.500px;
  line-height: 32px;
  color: rgba(130, 130, 130, .5);
`

const ActivateHint = styled.div`
  margin-top: 4px;
  font-size: 18px;
  line-height: 22px;
  color: rgba(130, 130, 130, .45);
`
